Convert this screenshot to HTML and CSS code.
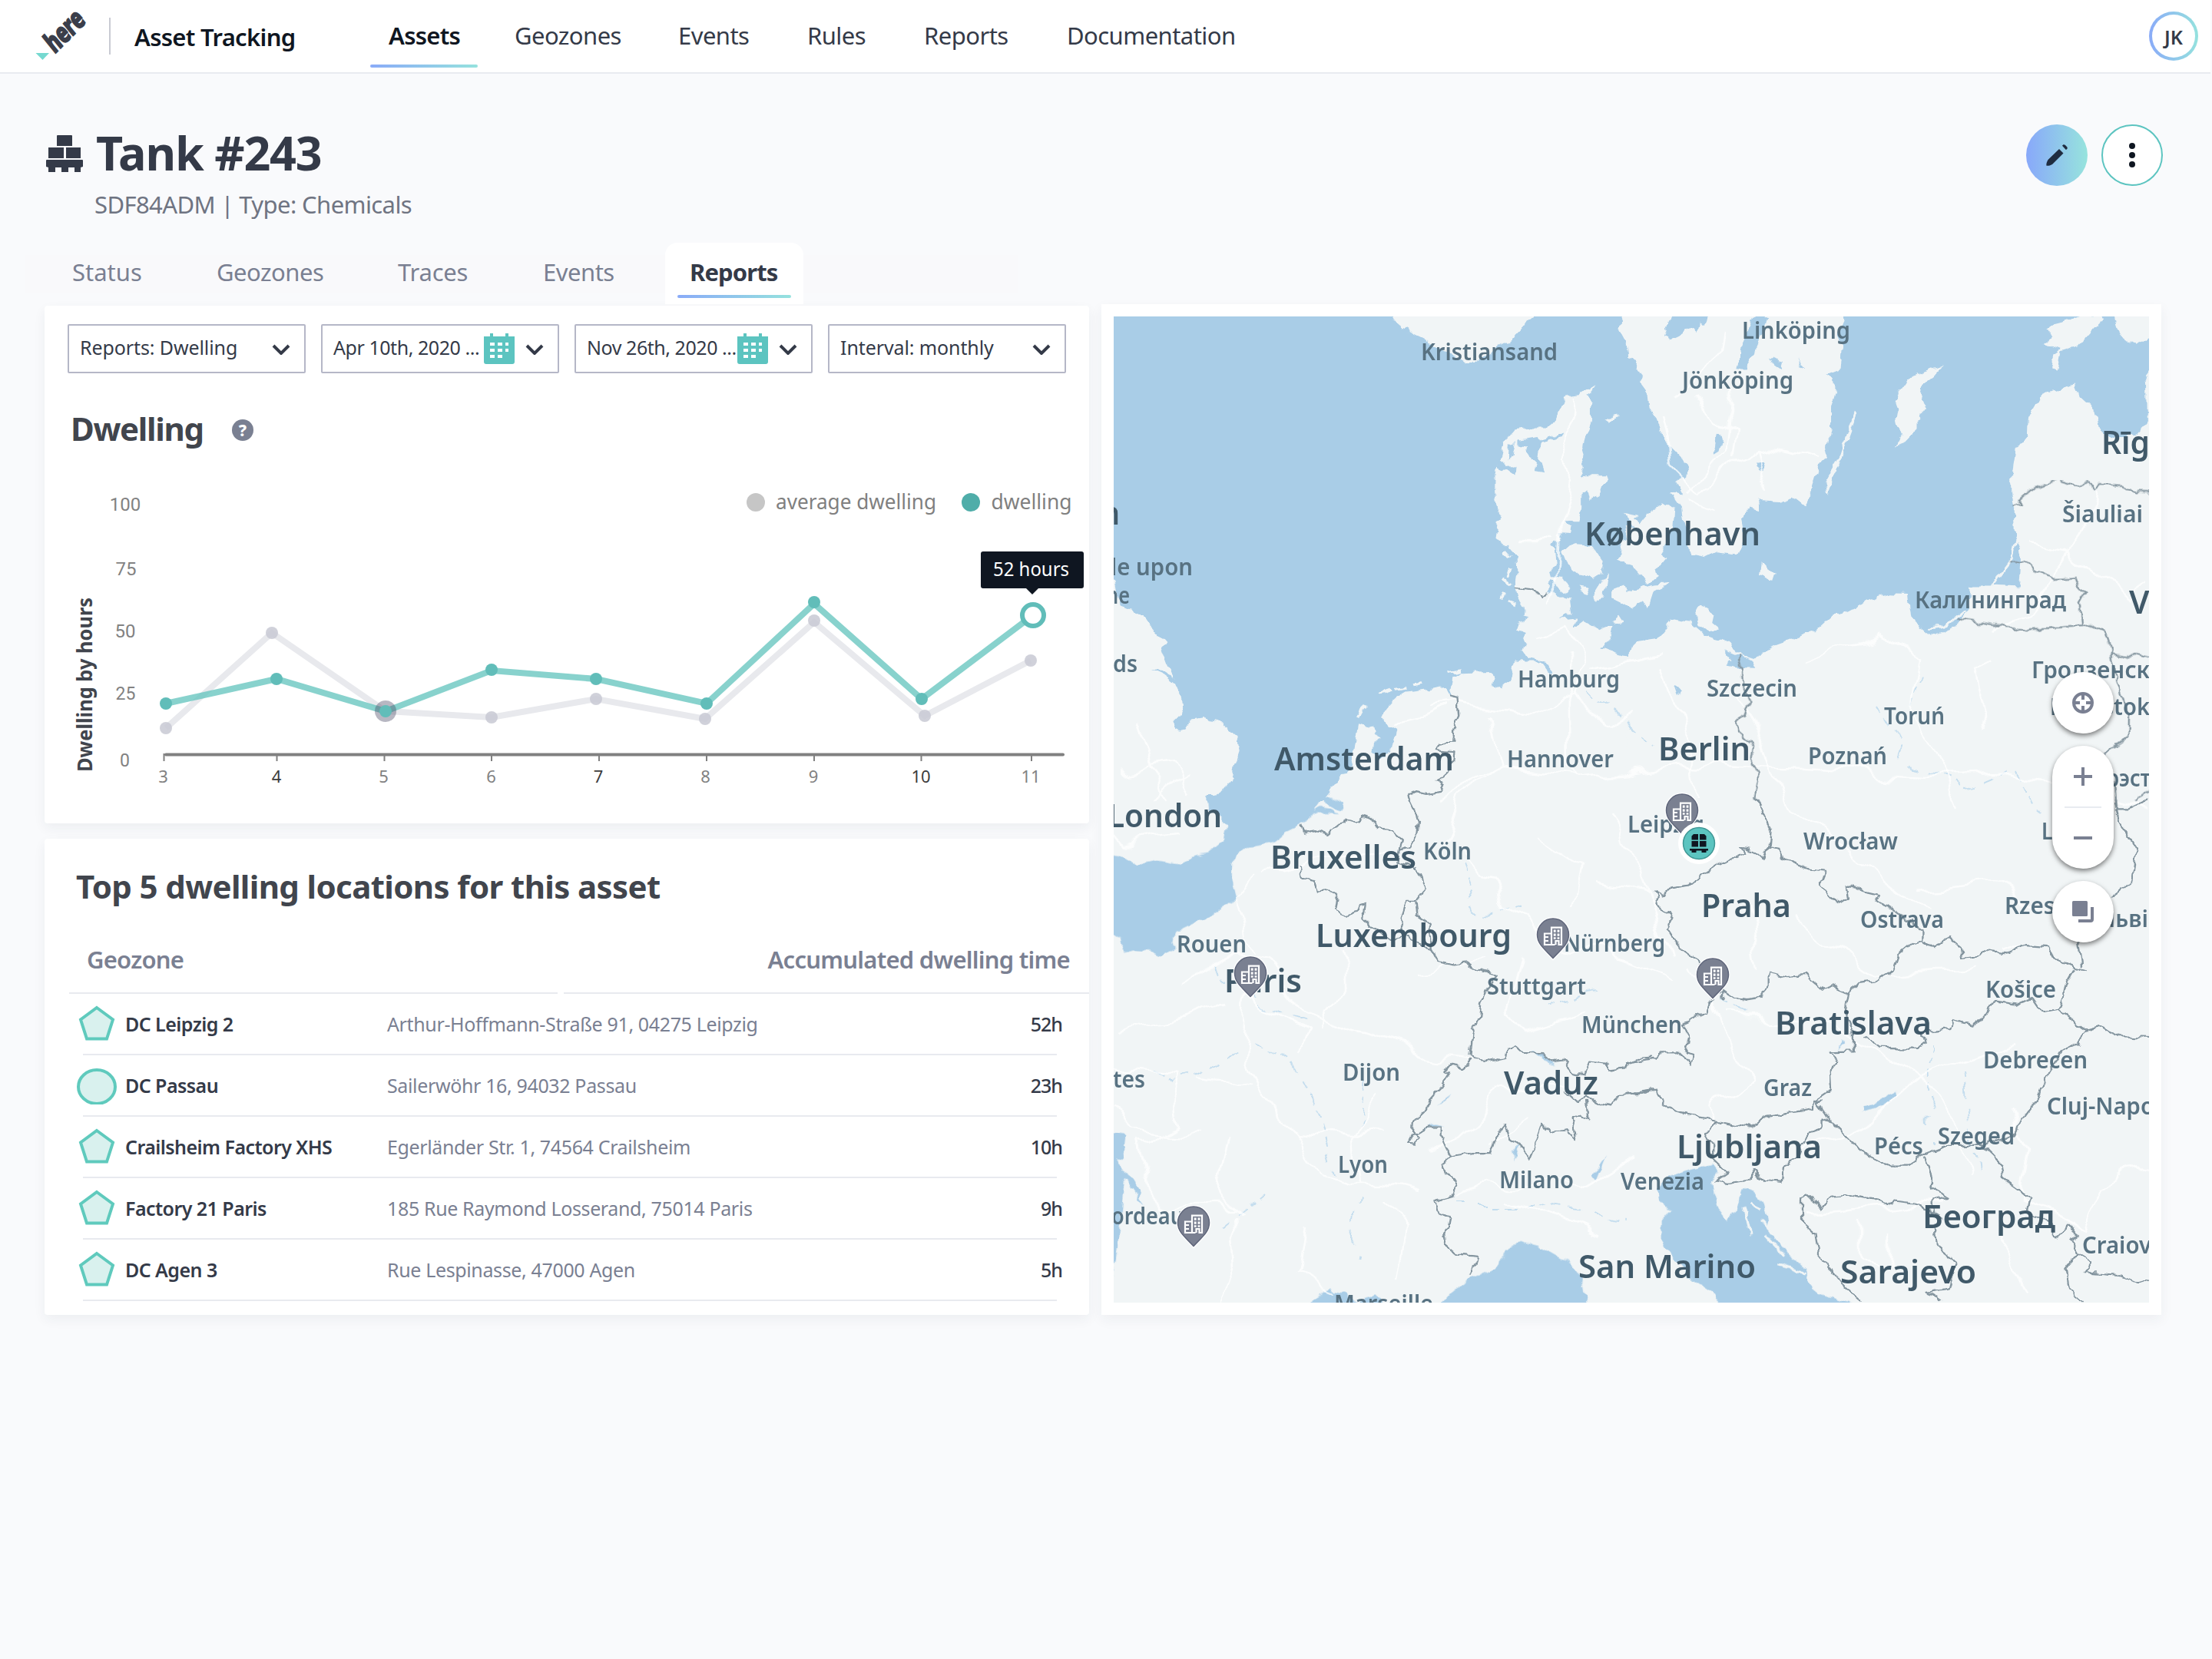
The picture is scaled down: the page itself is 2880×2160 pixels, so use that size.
FILE: index.html
```html
<!DOCTYPE html>
<html lang="en">
<head>
<meta charset="utf-8">
<title>Asset Tracking</title>
<link rel="stylesheet" href="styles.css">
</head>
<body>
<svg class="defs" width="0" height="0" aria-hidden="true">
  <defs>
    <symbol id="chevron" viewBox="0 0 24 14"><path d="M2 2l10 10L22 2" fill="none" stroke="currentColor" stroke-width="4"/></symbol>
    <symbol id="calendar" viewBox="0 0 40 40">
      <path fill="#5cc4c0" d="M0 4h8V0h4v4h16V0h4v4h8v33a3 3 0 0 1-3 3H3a3 3 0 0 1-3-3z"/>
      <path fill="#fff" d="M8 12h6v4H8zM18 12h6v4h-6zM28 12h4v4h-4zM8 20h6v4H8zM18 20h6v4h-6zM28 20h4v4h-4zM8 28h6v4H8zM18 28h6v4h-6z"/>
    </symbol>
    <symbol id="pentagon" viewBox="0 0 52 50"><path d="M26 4l21 15.500-8 25H13l-8-25z" fill="#d9f1ee" stroke="#5fcabd" stroke-width="4"/></symbol>
    <symbol id="circle" viewBox="0 0 52 50"><ellipse cx="26" cy="27" rx="24" ry="22" fill="#d9f1ee" stroke="#5fcabd" stroke-width="4"/></symbol>
    <g id="pin">
      <path d="M-21 22a21 21.500 0 0 1 42 0c0 12-10 19-21 31.500C-11 41-21 34-21 22z" fill="#fff" stroke="#fff" stroke-width="3"/>
      <path d="M-20.500 22a20.500 21 0 0 1 41 0c0 12-9.500 18.500-20.500 30.500C-11 40.500-20.500 34-20.500 22z" fill="#7a8091" stroke="#5f667b" stroke-width="1.500"/>
      <path fill="none" stroke="#fff" stroke-width="2.200" d="M2.500 35h-4.500V12.600H11V35H7.500v-5h-4v5M-3 20.500h-8V35h9M-10 25h4M-10 30h4"/>
      <path fill="#fff" d="M.8 15.500h2.800v3.200H.8zM5.600 15.500h2.800v3.200H5.600zM.8 20.500h2.800v3.200H.8zM5.600 20.500h2.800v3.200H5.600zM.8 25.200h2.800v2.500H.8zM5.600 25.200h2.800v2.500H5.600z"/>
    </g>
  </defs>
</svg>

<header class="topbar">
  <svg class="logo" viewBox="44 8 76 76" width="76" height="76" role="img" aria-label="here">
    <path d="M46.500 68h17.500l-8.500 9z" fill="#76d9d0"/>
    <text class="logo-text" transform="translate(71 69.500) rotate(-45) skewX(-6)" textLength="59" lengthAdjust="spacingAndGlyphs">here</text>
  </svg>
  <span class="topbar-divider"></span>
  <span class="product">Asset Tracking</span>
  <nav class="nav">
    <a class="nav-item nav-active">Assets</a>
    <a class="nav-item nav-geozones">Geozones</a>
    <a class="nav-item nav-events">Events</a>
    <a class="nav-item nav-rules">Rules</a>
    <a class="nav-item nav-reports">Reports</a>
    <a class="nav-item">Documentation</a>
  </nav>
  <span class="avatar"><span class="avatar-inner">JK</span></span>
</header>

<main class="page">
  <section class="asset-head">
    <svg class="pallet" viewBox="0 0 48 48" width="48" height="48"><path fill="#343a48" d="M15 0h18a1 1 0 0 1 1 1v13H14V1a1 1 0 0 1 1-1zM3 16h20v14H3zM26 16h19v14H26zM1 32h46a1 1 0 0 1 1 1v8l-3 1v6h-8v-6h-8v6h-9v-6h-8v6H3v-6l-3-1v-8a1 1 0 0 1 1-1z"/></svg>
    <div class="asset-title">
      <h1>Tank #243</h1>
      <p>SDF84ADM | Type: Chemicals</p>
    </div>
    <button class="round round-edit" aria-label="Edit"><svg viewBox="0 0 28 28" width="28" height="28"><path fill="#1f2c40" d="M17 6l5.500 5.500L8 26c-2.500 1.500-5 2-7.500 1.800C0 25.500.8 23 2.500 20zM21 1.800C22-.2 23.500-.2 25 1l2.200 2.300c1 1.400.6 2.700-1.400 3.700z"/></svg></button>
    <button class="round round-more" aria-label="More"><svg viewBox="0 0 8 32" width="8" height="32"><g fill="#0f1621"><circle cx="4" cy="4" r="4"/><circle cx="4" cy="16" r="4"/><circle cx="4" cy="28" r="4"/></g></svg></button>
  </section>

  <nav class="tabs">
    <a class="tab tab-status">Status</a>
    <a class="tab tab-geozones">Geozones</a>
    <a class="tab tab-traces">Traces</a>
    <a class="tab tab-events">Events</a>
    <a class="tab tab-active">Reports</a>
  </nav>

  <div class="columns">
    <div class="left">
      <section class="card chart-card">
        <div class="filters">
          <div class="select"><span>Reports: Dwelling</span><svg class="chev"><use href="#chevron"/></svg></div>
          <div class="select select-date"><span>Apr 10th, 2020 ...</span><svg class="cal"><use href="#calendar"/></svg><svg class="chev"><use href="#chevron"/></svg></div>
          <div class="select select-date"><span>Nov 26th, 2020 ...</span><svg class="cal"><use href="#calendar"/></svg><svg class="chev"><use href="#chevron"/></svg></div>
          <div class="select"><span>Interval: monthly</span><svg class="chev"><use href="#chevron"/></svg></div>
        </div>
        <div class="chart-title">
          <h2>Dwelling</h2>
          <span class="help">?</span>
        </div>
        <svg class="chart" viewBox="58 600 1360 472" width="1360" height="472">
          <g class="y-labels">
            <text x="163" y="665">100</text>
            <text x="164" y="749">75</text>
            <text x="163" y="830">50</text>
            <text x="163.500" y="911" class="y-narrow">25</text>
            <text x="162.500" y="998" class="y-narrow">0</text>
          </g>
          <text class="axis-title" transform="translate(119.500 1005) rotate(-90)" textLength="227" lengthAdjust="spacingAndGlyphs">Dwelling by hours</text>
          <g class="legend">
            <circle cx="984" cy="654" r="12" fill="#c6c6c6"/>
            <text x="1010" y="663" textLength="209" lengthAdjust="spacingAndGlyphs">average dwelling</text>
            <circle cx="1264" cy="654" r="12" fill="#4fada9"/>
            <text x="1290.500" y="663" textLength="105" lengthAdjust="spacingAndGlyphs">dwelling</text>
          </g>
          <path d="M213.500 981v10M360.500 981v10M500.500 981v10M640 981v10M780 981v10M920 981v10M1060 981v10M1199.500 981v10M1343 981v10" stroke="#808080" stroke-width="2"/>
          <path d="M216 982.500h1168" stroke="#808080" stroke-width="4" stroke-linecap="round"/>
          <g class="x-labels">
            <text x="212.500" y="1019">3</text><text x="360" y="1019" class="strong">4</text><text x="499.500" y="1019">5</text>
            <text x="639.500" y="1019">6</text><text x="779" y="1019" class="strong">7</text><text x="918.500" y="1019">8</text>
            <text x="1059" y="1019">9</text><text x="1199" y="1019" class="strong">10</text><text x="1342" y="1019">11</text>
          </g>
          <path d="M216 948L354 824 502 926 640 934 776 910 918 936 1060 810 1204 932 1342 860" fill="none" stroke="#e8e9ed" stroke-width="8"/>
          <path d="M216 916L360 884 502 926 640 873 776 884 920 916 1060 786 1200 910 1345 801" fill="none" stroke="#66c5bf" stroke-opacity=".78" stroke-width="8"/>
          <g fill="#c8c9d3" fill-opacity=".85"><circle cx="216" cy="948" r="8"/><circle cx="354" cy="824" r="8"/><circle cx="640" cy="934" r="8"/><circle cx="776" cy="910" r="8"/><circle cx="918" cy="936" r="8"/><circle cx="1060" cy="808" r="8"/><circle cx="1204" cy="932" r="8"/><circle cx="1342" cy="860" r="8"/></g>
          <circle cx="502" cy="926" r="14" fill="#4b4a66" fill-opacity=".4"/>
          <g fill="#61bdb9"><circle cx="216" cy="916" r="8"/><circle cx="360" cy="884" r="8"/><circle cx="502" cy="926" r="8"/><circle cx="640" cy="872" r="8"/><circle cx="776" cy="884" r="8"/><circle cx="920" cy="916" r="8"/><circle cx="1060" cy="784" r="8"/><circle cx="1200" cy="910" r="8"/></g>
          <circle cx="1345" cy="801" r="14" fill="#fff" stroke="#61bdb9" stroke-width="6"/>
          <path d="M1280 718h128a3 3 0 0 1 3 3v42a3 3 0 0 1-3 3h-56l-8 8-8-8h-56a3 3 0 0 1-3-3v-42a3 3 0 0 1 3-3z" fill="#0f1621"/>
          <text class="tip" x="1293" y="750" textLength="99" lengthAdjust="spacingAndGlyphs">52 hours</text>
        </svg>
      </section>

      <section class="card table-card">
        <h2>Top 5 dwelling locations for this asset</h2>
        <div class="thead">
          <div class="th">Geozone</div>
          <div class="th th-time">Accumulated dwelling time</div>
        </div>
        <div class="row"><svg class="zone"><use href="#pentagon"/></svg><b>DC Leipzig 2</b><span class="addr">Arthur-Hoffmann-Straße 91, 04275 Leipzig</span><span class="hours">52h</span></div>
        <div class="row"><svg class="zone"><use href="#circle"/></svg><b>DC Passau</b><span class="addr">Sailerwöhr 16, 94032 Passau</span><span class="hours">23h</span></div>
        <div class="row"><svg class="zone"><use href="#pentagon"/></svg><b>Crailsheim Factory XHS</b><span class="addr">Egerländer Str. 1, 74564 Crailsheim</span><span class="hours">10h</span></div>
        <div class="row"><svg class="zone"><use href="#pentagon"/></svg><b>Factory 21 Paris</b><span class="addr">185 Rue Raymond Losserand, 75014 Paris</span><span class="hours">9h</span></div>
        <div class="row"><svg class="zone"><use href="#pentagon"/></svg><b>DC Agen 3</b><span class="addr">Rue Lespinasse, 47000 Agen</span><span class="hours">5h</span></div>
      </section>
    </div>

    <section class="map-card">
      <svg class="map" viewBox="1450 412 1348 1284" width="1348" height="1284">
        <defs>
          <filter id="rough" x="0" y="0" width="100%" height="100%"><feTurbulence type="fractalNoise" baseFrequency=".07" numOctaves="2" seed="4"/><feDisplacementMap in="SourceGraphic" scale="11" xChannelSelector="R" yChannelSelector="G"/></filter>
          <filter id="bend" x="0" y="0" width="100%" height="100%"><feTurbulence type="fractalNoise" baseFrequency=".018" numOctaves="2" seed="9"/><feDisplacementMap in="SourceGraphic" scale="44" xChannelSelector="R" yChannelSelector="G"/></filter>
        </defs>
        <rect x="1450" y="412" width="1348" height="1284" fill="#f1f5f6"/>
        <g filter="url(#rough)">
          <rect x="1440" y="400" width="1370" height="645" fill="#a9cde7"/>
          <!-- land, north-west -->
          <g transform="translate(1430 390) scale(.4592 .4209)" fill="#f1f5f6">
            <path d="M833 20V52C850 85 890 105 940 130L1000 170 1040 195 1070 195 1110 165 1150 140 1175 120 1200 90 1215 65 1235 52V20Z"/>
            <path d="M20 860L44 870 52 920 70 955 130 980 150 1015 188 1062 178 1080 195 1130 217 1175 180 1150 150 1145 180 1160 215 1190 238 1245 240 1272 212 1305 222 1325 242 1335 262 1300 300 1295 350 1308 395 1355 400 1400 388 1440 380 1485 345 1530 308 1545 308 1590 20 1590Z"/>
            <path d="M630 1590L640 1540 670 1500 700 1465 720 1440 728 1380 738 1312 760 1318 778 1325 782 1345 805 1358 782 1375 778 1400 800 1420 825 1395 838 1370 848 1335 820 1320 808 1290 815 1265 840 1235 870 1215 920 1210 985 1200 995 1225 1005 1170 1030 1153 1110 1150 1125 1175 1120 1195 1140 1205 1165 1180 1172 1130 1185 1115 1215 1120 1255 1120 1275 1150 1288 1152 1265 1118 1220 1108 1205 1085 1212 1060 1205 1035 1180 1025 1190 1005 1225 985 1208 980 1210 955 1190 920 1182 890 1188 850 1186 800 1165 770 1140 758 1122 745 1130 690 1148 680 1130 640 1124 600 1125 540 1130 510 1142 480 1150 440 1178 405 1225 398 1270 398 1290 380 1330 297 1365 292 1410 262 1388 300 1398 325 1398 380 1380 430 1370 470 1378 515 1365 550 1380 540 1440 540 1445 560 1420 600 1395 625 1388 590 1368 610 1368 650 1362 685 1325 685 1340 700 1338 722 1300 720 1310 745 1285 755 1295 775 1300 820 1285 840 1290 860 1275 880 1272 905 1335 930 1340 970 1310 990 1355 985 1350 1015 1375 995 1415 1020 1440 1010 1460 1010 1452 1050 1425 1080 1470 1095 1500 1105 1515 1070 1540 1055 1575 1050V1590Z"/>
            <path d="M1315 780L1340 755 1400 760 1430 810 1425 850 1405 865 1360 850 1330 820ZM1455 900L1490 885 1500 910 1535 900 1560 920 1540 940 1510 955 1455 925ZM1442 845L1436 890 1415 935 1408 905ZM1280 855L1320 860 1340 895 1325 910 1300 890ZM1360 885L1385 890 1392 910 1375 905ZM1455 990L1470 975 1485 1000 1465 1005ZM1435 370L1475 358 1450 382ZM1490 660L1530 670 1510 685Z"/>
            <path d="M735 1295L758 1250M795 1219L830 1206M842 1204L876 1199M895 1196L915 1190M990 1155L1030 1148M1150 780L1165 798M1170 830L1162 860M1148 865L1170 880M1150 905L1142 930M1160 935L1185 945" fill="none" stroke="#f1f5f6" stroke-width="9"/>
            <g fill="#a9cde7"><path d="M1190 435L1245 425 1250 436 1320 412 1315 425 1256 442 1248 490 1262 535 1235 530 1240 500 1215 480 1210 455 1190 450ZM1130 490L1165 520 1190 510 1188 545 1160 535 1128 520ZM1165 445L1182 440 1175 490 1162 500Z"/></g>
          </g>
          <!-- land, north-east -->
          <g transform="translate(2120 390) scale(.4592 .4209)" fill="#f1f5f6">
            <path d="M-20 20V52L-25 90 -5 130 -2 180 25 190 20 215 45 235 35 260 55 290 60 340 80 370 100 430 145 480 168 530 165 560 135 560 155 600 120 595 150 640 155 680 165 740 175 790 215 798 250 780 310 788 330 740 320 680 345 640 370 650 365 620 430 625 470 610 500 635 520 590 540 520 560 480 575 400 575 330 590 270 565 230 600 215 605 150 590 110 610 60 608 20Z"/>
            <path d="M-30 805L-20 780 -25 745 0 740 -5 700 20 710 0 665 35 690 60 655 95 628 130 645 125 700 115 740 90 790 110 800 95 820 75 830 80 860 55 880 35 850 10 820ZM75 880L122 876 72 902 55 960 42 930 0 930 10 900ZM190 975L205 945 245 975 240 1000 262 1020 230 1032 195 1010ZM372 815L420 845 412 872 368 850ZM640 348L648 358 600 500 565 605 558 560 600 480ZM755 310L800 240 890 205 860 240 835 260 830 310 845 335 820 370 820 400 785 440 760 450 775 420 758 370 765 340ZM1185 85L1240 70 1300 40 1350 60 1320 90 1280 140 1225 160 1215 215 1198 210 1205 170 1225 155 1180 135 1205 115ZM1375 30L1390 110 1440 145 1500 95V30Z"/>
            <path d="M1500 180L1465 235 1470 260 1472 380 1440 420 1370 425 1338 405 1325 345 1280 300 1265 260 1165 300 1132 370 1130 415 1095 465 1085 530 1085 600 1095 660 1098 740 1110 770 1115 800 1108 890 1030 885 965 885 968 950 950 975 935 1000 900 1028 860 1040 820 1005 800 980 790 910 740 908 680 930 620 965 580 975 530 1025 470 1050 380 1085 360 1110 320 1100 270 1055 215 1040 175 1000 120 990 85 1045 20 1055 0 1100 -10 1590H1500Z"/>
            <path d="M1100 740L1088 800 1030 885M955 960L900 1010 850 1018" fill="none" stroke="#f1f5f6" stroke-width="7"/>
            <path fill="#a9cde7" d="M318 150L355 60 370 30 395 60 385 90 355 170 330 215 308 215ZM100 110L130 30H235L215 80 200 70 195 100 180 85 140 110 120 120ZM270 1080L300 1095 350 1115 362 1140 320 1138 275 1130 295 1115ZM400 180L440 195 435 215 415 200ZM480 180L505 215 490 205ZM250 420L268 425 258 465 243 475ZM360 505L385 505 380 535 362 520ZM130 1190L148 1210 140 1222Z"/>
          </g>
          <!-- seas and lakes, south-west -->
          <g transform="translate(1430 1040) scale(.4592 .4464)" fill="#a9cde7">
            <path d="M308 -10L312 30 350 50 362 80 355 122 312 158 275 165 230 190 175 178 110 188 70 170 20 160V375L60 405 68 445 100 438 150 445 180 460 215 435 210 415 225 385 300 348 345 325 392 290 380 240 382 190 390 160 430 140 490 130 530 100 580 75 600 50 620 20 640 -10Z"/>
            <path d="M950 1500L1000 1440 1050 1400 1125 1370 1160 1315 1200 1292 1250 1305 1310 1340 1340 1350 1365 1390 1375 1430 1395 1500ZM590 1500L610 1460 655 1435 700 1445 735 1465 790 1450 830 1500ZM20 975L75 980 72 1010 78 1050 55 1050 60 1080 100 1110 130 1190 105 1150 75 1105 65 1200 55 1300 44 1400H20Z"/>
            <path d="M915 968Q945 940 985 958 945 955 915 968ZM960 892L1003 860 985 880ZM1228 735Q1270 745 1295 778 1270 770 1228 735ZM1440 1038L1410 1115 1400 1100ZM1190 1005L1180 1060 1175 1030ZM600 40L680 45 660 30 630 25ZM620 0L690 40 700 15 660 -5Z"/>
          </g>
          <!-- seas and lakes, south-east -->
          <g transform="translate(2120 1040) scale(.4592 .4464)">
            <path fill="#a9cde7" d="M85 1140L115 1100 170 1085 240 1065 260 1090 235 1110 240 1150 255 1200 280 1230 310 1200 325 1140 355 1150 385 1180 395 1220 400 1260 430 1300 500 1370 515 1420 545 1445 625 1470 660 1500H270L240 1440 180 1400 130 1340 95 1290 95 1230 120 1200 90 1175ZM665 895Q720 885 752 848L762 862Q720 903 668 910Z"/>
            <path fill="#a9cde7" d="M597 735L610 698 612 715Z"/>
            <path d="M330 1190L345 1270M345 1175L370 1200M380 1230L430 1290 465 1330M385 1270L440 1330M430 1360L500 1385" fill="none" stroke="#f1f5f6" stroke-width="9"/>
          </g>
        </g>
        <!-- rivers -->
        <g fill="none" stroke="#b9d7ec" stroke-opacity=".8" stroke-width="1.800" stroke-dasharray="12 9" filter="url(#bend)">
          <path d="M1585 1250L1600 1270 1650 1310 1700 1330M1630 1352L1680 1385 1715 1450 1735 1530M1500 1395L1525 1410 1610 1375M1780 1400L1770 1470M1775 1560L1765 1640M1900 1115L1925 1180 1990 1185M2010 1310L2080 1290M2070 900L2100 930 2150 970M2450 920L2490 1000 2560 1025 2620 1000M2630 1000L2660 1060M2510 1350L2512 1480M2560 1400L2575 1540M2225 1300L2280 1330M1585 1590L1640 1545M2490 930L2505 870M1900 1570L2000 1570 2110 1590"/>
        </g>
        <!-- roads -->
        <g fill="none" stroke="#fff" stroke-opacity=".75" stroke-width="2.600" stroke-linejoin="round" filter="url(#bend)">
          <path d="M2045 530L2040 560 2030 590 2050 630 2040 670 2022 710 2015 780M2040 850L2042 1000 2055 1010M1975 712H2015M2000 830L2045 818 2065 860 2045 900 1995 930 1900 915 1860 920M2045 900L2095 950 2120 935M2075 865L2120 855 2160 845M1940 930L1960 1000 1900 1040 1880 1100M1820 940L1890 920M1880 1040L1960 1000 2055 1010 2200 995 2350 1000 2500 1010 2620 1005 2790 1050"/>
          <path d="M2165 530L2175 600 2215 640 2275 590 2290 580 2360 600M2255 510L2245 590 2200 640M2290 580L2305 640M2240 432L2235 470 2185 510M2215 510L2235 550 2260 560 2255 600M2200 650L2230 665"/>
          <path d="M2160 865L2170 900 2200 960 2210 1040M2250 890L2300 970 2330 1060 2400 1100 2500 1180M2340 860L2450 830 2500 850 2490 930 2530 1010 2545 1050M2590 850L2570 870 2590 950M2640 710L2700 720 2770 780 2798 760M2700 720L2740 630M2700 720L2640 800 2600 820M2500 1160L2600 1150 2650 1180"/>
          <path d="M1530 1280L1600 1240 1650 1250 1700 1320 1790 1350 1850 1370 1920 1380M1600 1310L1450 1350M1625 1300L1620 1380 1650 1430 1680 1470 1800 1480M1630 1300L1700 1340 1690 1370M1745 1230L1745 1290 1720 1340M1850 1260L1930 1250M1450 1390L1530 1400 1540 1460 1490 1490 1500 1540 1500 1570 1600 1570M1560 1400L1630 1410M1600 1480L1590 1540 1605 1580M1680 1470L1720 1530 1750 1540 1800 1540 1850 1550M1770 1540L1765 1480 1800 1420M1600 1580L1605 1650 1590 1696M1700 1600L1690 1660 1740 1680M1800 1560L1830 1600 1820 1660M1450 1440L1480 1470 1560 1475M1640 1140L1610 1170 1630 1240M1650 1140L1700 1120 1800 1110M1530 1090L1470 1100 1450 1090M1460 1000L1530 990 1550 1040M1500 1040L1550 1010M1480 940L1500 1000 1520 1040"/>
          <path d="M1900 1100L1960 1180 2000 1200 2010 1230 2100 1240 2180 1270M1980 1250L1960 1310 1990 1340 2060 1320M2000 1090L2060 1130 2050 1180M2100 1060L2150 1180 2170 1240M2080 1150L2140 1160M2200 1250L2260 1370 2280 1400 2230 1440 2230 1480M2250 1330L2380 1330 2500 1400 2620 1360M2500 1400L2430 1460 2350 1500M2500 1400L2550 1470 2560 1540M2340 1200L2440 1270 2560 1260M2280 1180L2290 1260M2600 1240L2640 1230M2620 1450L2640 1500 2630 1560 2720 1600 2740 1540 2798 1520M2130 1500L2060 1540 1940 1540 1900 1560M1960 1560L2080 1610M1870 1500L1960 1420 2040 1420M2420 1590L2420 1640 2460 1640 2460 1600M2350 1580L2450 1570 2530 1560M2600 1600L2640 1670M1930 1490L1990 1450"/>
        </g>
        <!-- country borders -->
        <g class="borders" filter="url(#rough)">
          <path d="M1182 893L1225 898 1245 905 1258 917 1272 908M992 1222L1018 1228 1022 1290 1005 1330 1002 1368 965 1370 962 1395 1005 1400 1000 1450 962 1488 978 1505 970 1522 930 1530 895 1522 878 1530 882 1545" transform="translate(1430 390) scale(.4592 .4209)"/>
          <path d="M1090 640L1110 635 1110 620 1150 580 1215 560 1270 578 1305 565 1320 585 1340 570 1400 575 1440 595 1490 597M1080 812L1115 818 1130 812 1150 835 1210 865 1268 860 1275 880 1297 905 1280 940 1285 1008M930 990L1020 1005 1130 1020 1285 1010 1310 1005 1360 1045 1370 1100 1380 1160 1420 1290 1418 1355 1365 1395 1350 1410M1370 1100L1410 1110 1440 1095 1490 1105M312 1100L322 1140 325 1200 345 1240 330 1285 305 1310 310 1335 355 1380 350 1420 372 1480 360 1540 375 1568M1490 1515L1440 1545M1378 1490L1385 1568" transform="translate(2120 390) scale(.4592 .4209)"/>
          <path d="M580 80L585 100 610 92 650 105 685 75 700 72 705 58 740 68 750 50 775 58 790 85 830 90 862 115 855 150 850 185 900 205M880 0L908 60 905 100 880 140 855 150M900 200L915 235 928 265 900 300 875 300 858 350 865 400M900 300L905 340 940 365 945 440M570 200L575 232 612 240 620 270 660 265 680 285 672 325 710 340 735 330 740 305 757 300 752 350 780 378 830 415 870 400 915 425 945 435 965 475 1005 485 1045 480 1075 497 1135 515 1100 560 1085 600 1080 640 1062 680 1055 745 1070 760 1110 765 1155 755 1160 730 1180 720 1205 742 1250 742 1290 768 1320 765 1350 800 1375 805 1390 765 1440 770 1450 790 1490 785 1530 755 1568 752M1060 760L1040 782 1000 775 985 795 995 800 970 840 935 880 930 905 895 940 893 970 910 990 895 1005 878 1003 890 980 930 960 975 960 975 990 1000 1045 1060 1035 1110 1035 1125 990 1155 950 1170 995 1205 1020 1220 1055 1235 1020 1260 945 1280 975 1330 965 1355 990 1345 930 1365 920 1390 935 1385 880M1320 850L1355 885 1385 870 1425 890 1455 897 1475 862 1540 860 1568 850M1000 1045L975 1065 985 1085 1000 1110 1015 1130 1005 1160 955 1175 965 1205 1000 1220 995 1250 980 1265 985 1300 1020 1330 1075 1335 1055 1390" transform="translate(1430 1040) scale(.4592 .4464)"/>
          <path d="M360 0L380 45 405 85 400 140 380 175 355 150 320 140 330 160 265 185 205 225 175 250 120 258 95 290 78 270 85 310 125 345 110 375 150 440 190 470 240 530 270 560 300 580 340 585 370 580 400 545 400 508 450 520 505 515 550 555 580 545 625 565 650 535 700 530 750 500 765 455 805 420 835 415 870 435 910 405 945 435 950 470 985 465 1005 440 1080 450 1120 430 1190 435 1205 465 1265 490 1300 500M385 160L405 145 430 150 445 180 510 205 560 210 545 250 590 305 625 290 620 250 670 270 712 280 700 300 760 330 835 385 835 415M1265 495L1240 540 1235 570 1220 615 1265 650 1300 675 1335 665 1390 690 1490 695M670 690L710 725 820 728 840 715 830 680 910 670 920 645 970 660 1010 635 1035 590 1100 600 1145 580 1175 625 1220 615M625 565L615 620 640 690 640 738 570 740 595 765 570 795 573 850 530 880 575 940M1300 675L1275 715 1230 735 1190 795 1165 870 1115 940 1095 980 1000 1010M1380 0L1390 60 1440 150 1430 240 1370 285M1275 400L1285 490M1380 30L1420 30 1470 5M228 590L220 625 155 655 175 700 165 740 185 745 180 775 140 740 90 740 80 755 0 770M0 860L80 848 90 880 130 915 250 938 350 960 390 925 480 912 525 905 525 880 550 885M265 590L270 560 228 590M250 938L220 975 240 1010 240 1050 280 1090 245 1115 285 1120 340 1110 355 1085 385 1115 435 1120 440 1070 480 1050 510 975 550 960 550 935 580 945 630 995 680 1040 740 1070 795 1070 840 1035 905 1010 1000 1010M840 1045L860 1100 860 1135 905 1160 865 1170 870 1215M660 1465L600 1410 540 1330 530 1270 490 1235 490 1165 510 1155 550 1195 575 1160 620 1155 700 1170 735 1185 760 1175 830 1185 890 1225M870 1240L875 1305 930 1350 910 1430 850 1440 890 1468M1000 1010L1060 1070 1065 1110 1140 1165 1130 1200 1200 1240 1215 1280 1250 1245 1280 1270 1255 1290 1275 1325 1315 1350 1295 1380 1400 1390 1445 1410 1490 1400M1275 1325L1240 1370 1250 1430 1290 1468" transform="translate(2120 1040) scale(.4592 .4464)"/>
        </g>
        <g class="city">
          <text x="1850" y="469" textLength="178" lengthAdjust="spacingAndGlyphs">Kristiansand</text><text x="2268" y="441" textLength="141" lengthAdjust="spacingAndGlyphs">Linköping</text><text x="2190" y="506" textLength="145" lengthAdjust="spacingAndGlyphs">Jönköping</text>
          <text x="2685" y="680" textLength="105" lengthAdjust="spacingAndGlyphs">Šiauliai</text><text x="2493" y="792" textLength="197" lengthAdjust="spacingAndGlyphs">Калининград</text><text x="2645" y="883" textLength="154" lengthAdjust="spacingAndGlyphs">Гродзенск</text>
          <text x="2669" y="931" textLength="130" lengthAdjust="spacingAndGlyphs">Białystok</text><text x="2725" y="1024" textLength="75" lengthAdjust="spacingAndGlyphs">Брэст</text><text x="2658" y="1093" textLength="80" lengthAdjust="spacingAndGlyphs">Lublin</text>
          <text x="2610" y="1190" textLength="122" lengthAdjust="spacingAndGlyphs">Rzeszów</text><text x="2733" y="1207" textLength="64" lengthAdjust="spacingAndGlyphs">Льві</text>
          <text x="1446" y="749" textLength="107" lengthAdjust="spacingAndGlyphs">le upon</text><text x="1440" y="786" textLength="31" lengthAdjust="spacingAndGlyphs">ne</text><text x="1449" y="875" textLength="32" lengthAdjust="spacingAndGlyphs">ds</text>
          <text x="1976" y="895" textLength="133" lengthAdjust="spacingAndGlyphs">Hamburg</text><text x="2222" y="907" textLength="118" lengthAdjust="spacingAndGlyphs">Szczecin</text><text x="2453" y="943" textLength="79" lengthAdjust="spacingAndGlyphs">Toruń</text>
          <text x="1962" y="999" textLength="139" lengthAdjust="spacingAndGlyphs">Hannover</text><text x="2354" y="995" textLength="103" lengthAdjust="spacingAndGlyphs">Poznań</text><text x="1853" y="1119" textLength="63" lengthAdjust="spacingAndGlyphs">Köln</text>
          <text x="2119" y="1084" textLength="100" lengthAdjust="spacingAndGlyphs">Leipzig</text><text x="2348" y="1106" textLength="123" lengthAdjust="spacingAndGlyphs">Wrocław</text><text x="2422" y="1208" textLength="109" lengthAdjust="spacingAndGlyphs">Ostrava</text>
          <text x="2036" y="1239" textLength="132" lengthAdjust="spacingAndGlyphs">Nürnberg</text><text x="1532" y="1240" textLength="91" lengthAdjust="spacingAndGlyphs">Rouen</text><text x="1936" y="1295" textLength="129" lengthAdjust="spacingAndGlyphs">Stuttgart</text>
          <text x="2059" y="1345" textLength="131" lengthAdjust="spacingAndGlyphs">München</text><text x="2585" y="1299" textLength="92" lengthAdjust="spacingAndGlyphs">Košice</text><text x="2582" y="1391" textLength="136" lengthAdjust="spacingAndGlyphs">Debrecen</text>
          <text x="2665" y="1451" textLength="140" lengthAdjust="spacingAndGlyphs">Cluj-Napo</text><text x="1748" y="1407" textLength="75" lengthAdjust="spacingAndGlyphs">Dijon</text><text x="1449" y="1416" textLength="42" lengthAdjust="spacingAndGlyphs">tes</text>
          <text x="2296" y="1427" textLength="63" lengthAdjust="spacingAndGlyphs">Graz</text><text x="2440" y="1503" textLength="64" lengthAdjust="spacingAndGlyphs">Pécs</text><text x="2523" y="1490" textLength="100" lengthAdjust="spacingAndGlyphs">Szeged</text>
          <text x="1742" y="1527" textLength="65" lengthAdjust="spacingAndGlyphs">Lyon</text><text x="1952" y="1547" textLength="97" lengthAdjust="spacingAndGlyphs">Milano</text><text x="2110" y="1549" textLength="109" lengthAdjust="spacingAndGlyphs">Venezia</text>
          <text x="1447" y="1594" textLength="94" lengthAdjust="spacingAndGlyphs">ordeau</text><text x="2711" y="1632" textLength="90" lengthAdjust="spacingAndGlyphs">Craiov</text><text x="1737" y="1708" textLength="129" lengthAdjust="spacingAndGlyphs">Marseille</text>
        </g>
        <g class="capital">
          <text x="1434" y="683" textLength="24" lengthAdjust="spacingAndGlyphs">n</text><text x="2063" y="710" textLength="229" lengthAdjust="spacingAndGlyphs">København</text><text x="2736" y="591" textLength="63" lengthAdjust="spacingAndGlyphs">Rīg</text><text x="2772" y="799">V</text>
          <text x="1659" y="1003" textLength="234" lengthAdjust="spacingAndGlyphs">Amsterdam</text><text x="2159" y="990" textLength="120" lengthAdjust="spacingAndGlyphs">Berlin</text><text x="1442" y="1077" textLength="149" lengthAdjust="spacingAndGlyphs">London</text>
          <text x="1654" y="1131" textLength="190" lengthAdjust="spacingAndGlyphs">Bruxelles</text><text x="2215" y="1194" textLength="117" lengthAdjust="spacingAndGlyphs">Praha</text><text x="1713" y="1233" textLength="255" lengthAdjust="spacingAndGlyphs">Luxembourg</text>
          <text x="1594" y="1292" textLength="101" lengthAdjust="spacingAndGlyphs">Paris</text><text x="2311" y="1347" textLength="204" lengthAdjust="spacingAndGlyphs">Bratislava</text><text x="1958" y="1425" textLength="123" lengthAdjust="spacingAndGlyphs">Vaduz</text>
          <text x="2183" y="1508" textLength="189" lengthAdjust="spacingAndGlyphs">Ljubljana</text><text x="2503" y="1599" textLength="173" lengthAdjust="spacingAndGlyphs">Београд</text><text x="2055" y="1664" textLength="231" lengthAdjust="spacingAndGlyphs">San Marino</text><text x="2396" y="1671" textLength="177" lengthAdjust="spacingAndGlyphs">Sarajevo</text>
        </g>
        <use href="#pin" x="1628" y="1245"/><use href="#pin" x="2022" y="1195"/><use href="#pin" x="1554" y="1570"/><use href="#pin" x="2230" y="1247"/><use href="#pin" x="2190" y="1033"/>
        <g transform="translate(2212 1098)">
          <circle r="27" fill="#fff"/><circle r="20.500" fill="#5cc4c0" stroke="#3f9694" stroke-width="1.500"/>
          <path fill="#0f1621" d="M-7-12h6v7.500h-8.500V-9.500zM1-12h6l2.500 2.500v5H1zM-9.500-3h8.500v7.500h-8.500zM1-3h8.500v7.500H1zM-12 7h24v2.500H9.500V12h-6V9.500h-7V12h-6V9.500H-12z"/>
        </g>
      </svg>
      <div class="map-controls">
        <button class="ctl" aria-label="Locate"><svg viewBox="0 0 28 28" width="28" height="28" fill="none" stroke="#7a8092" stroke-width="4"><circle cx="14" cy="14" r="12"/><path d="M14 2v8M14 18v8M2 14h8M18 14h8"/></svg></button>
        <div class="zoom-ctl">
          <button class="zoom-btn" aria-label="Zoom in"><svg viewBox="0 0 24 24" width="24" height="24" stroke="#7a8092" stroke-width="4"><path d="M12 0v24M0 12h24"/></svg></button>
          <span class="zoom-line"></span>
          <button class="zoom-btn zoom-out" aria-label="Zoom out"><svg viewBox="0 0 24 24" width="24" height="24" stroke="#7a8092" stroke-width="4"><path d="M0 12h24"/></svg></button>
        </div>
        <button class="ctl" aria-label="Layers"><svg viewBox="0 0 28 28" width="28" height="28"><rect width="20" height="20" rx="1.500" fill="#7a8092"/><path d="M26 8v16a2 2 0 0 1-2 2H8" fill="none" stroke="#7a8092" stroke-width="4"/></svg></button>
      </div>
    </section>
  </div>
</main>
</body>
</html>
```
FILE: styles.css
```css
* { box-sizing: border-box; }

body {
  margin: 0;
  width: 2880px;
  height: 2160px;
  overflow: hidden;
  background: #f9fafc;
  color: #343a48;
  font-family: "Noto Sans", "Open Sans", sans-serif;
}

.defs { display: block; position: absolute; }
button { padding: 0; border: 0; background: #fff; }
h1, h2, p { margin: 0; }

/* Top bar */
.topbar {
  display: flex;
  align-items: center;
  height: 96px;
  width: 2878px;
  padding: 0 16px 0 44px;
  background: #fff;
  border-bottom: 2px solid #e8ebf0;
}
.logo { display: block; overflow: visible; }
.logo-text { font-size: 36px; font-weight: 800; fill: #3b3e4a; stroke: #3b3e4a; stroke-width: 2; }
.topbar-divider { width: 2px; height: 48px; margin: 0 31px 0 22px; background: #c9cbd3; }
.product { width: 307px; font-size: 31px; font-weight: 600; letter-spacing: -.68px; line-height: 94px; padding-top: 2px; color: #0f1621; white-space: nowrap; }
.nav { display: flex; flex: 1; height: 94px; }
.nav-item {
  position: relative;
  height: 94px;
  font-size: 31px;
  letter-spacing: -.55px;
  line-height: 92px;
  white-space: nowrap;
}
.nav-active { width: 140px; margin-right: 48px; padding-left: 24px; font-weight: 600; letter-spacing: -.7px; color: #0f1621; }
.nav-active::after {
  content: "";
  position: absolute;
  left: 0;
  bottom: 6px;
  width: 140px;
  height: 4px;
  border-radius: 2px;
  background: linear-gradient(90deg, #8aabf8, #95e2de);
}
.nav-geozones { width: 213px; }
.nav-events { width: 168px; }
.nav-rules { width: 152px; }
.nav-reports { width: 186px; }
.avatar {
  width: 64px;
  height: 64px;
  padding: 4px;
  border-radius: 50%;
  background: linear-gradient(90deg, #8aabf8, #95e2de);
}
.avatar-inner {
  display: block;
  height: 56px;
  border-radius: 50%;
  background: #fff;
  font-size: 25px;
  font-weight: 600;
  line-height: 58px;
  text-align: center;
}

/* Asset heading */
.asset-head { display: flex; height: 220px; padding: 66px 64px 0 60px; }
.pallet { margin-top: 14px; }
.asset-title { flex: 1; padding-left: 15px; }
h1 { padding: 1px 0 0 2px; font-size: 61px; font-weight: 700; letter-spacing: -1.2px; line-height: 72px; white-space: nowrap; }
.asset-title p { font-size: 31px; letter-spacing: -.6px; line-height: 62px; color: #6f7482; white-space: nowrap; }
.round {
  display: flex;
  align-items: center;
  justify-content: center;
  width: 80px;
  height: 80px;
  border-radius: 50%;
}
.round-edit { margin-right: 18px; background: linear-gradient(90deg, #88a8fa, #97e4dd); }
.round-more { border: 2px solid #5cc4c0; }

/* Tabs */
.tabs {
  display: flex;
  align-items: flex-end;
  width: 1292px;
  height: 80px;
  margin-left: 33px;
  padding-left: 61px;
  background: linear-gradient(#f9f9fb, #f9f9fb) 0 16px / 100% 49px no-repeat;
}
.tab { height: 80px; font-size: 31px; letter-spacing: -.5px; line-height: 76px; color: #7a8092; white-space: nowrap; }
.tab-status { width: 188px; letter-spacing: 0; }
.tab-geozones { width: 236px; }
.tab-traces { width: 189px; letter-spacing: -.2px; }
.tab-events { width: 159px; }
.tab-active {
  position: relative;
  width: 180px;
  padding-left: 32px;
  border-radius: 16px 16px 0 0;
  background: #fff;
  color: #343a48;
  font-weight: 700;
  letter-spacing: -.9px;
}
.tab-active::after {
  content: "";
  position: absolute;
  left: 16px;
  bottom: 8px;
  width: 148px;
  height: 4px;
  border-radius: 2px;
  background: linear-gradient(90deg, #8aabf8, #95e2de);
}

/* Columns */
.columns { display: flex; gap: 16px; padding-left: 58px; }
.left { display: flex; flex-direction: column; gap: 20px; width: 1360px; padding-top: 2px; }
.card { border-radius: 4px; background: #fff; box-shadow: 0 6px 16px rgba(40, 50, 70, .06); }

/* Chart card */
.chart-card { height: 674px; padding-top: 24px; }
.filters { display: flex; gap: 20px; padding: 0 30px; }
.select {
  display: flex;
  align-items: center;
  width: 310px;
  height: 64px;
  padding: 0 18px 0 14px;
  border: 2px solid #b5b7c7;
  border-radius: 2px;
  font-size: 25px;
  letter-spacing: -.1px;
  line-height: 36px;
  white-space: nowrap;
}
.select-date { letter-spacing: -.45px; }
.select > span { flex: 1; width: 0; padding-bottom: 4px; }
.cal { width: 40px; height: 40px; margin-right: 14px; }
.chev { width: 24px; height: 14px; margin-top: 2px; }
.chart-title { display: flex; align-items: center; height: 114px; padding: 30px 0 0 34px; }
h2 { font-size: 42px; font-weight: 700; letter-spacing: -.62px; line-height: 60px; color: #41454d; white-space: nowrap; }
.chart-title h2 { width: 210px; letter-spacing: -1.3px; }
.help {
  width: 28px;
  height: 28px;
  margin-top: 4px;
  border-radius: 50%;
  background: #7a8092;
  color: #fff;
  font-size: 21px;
  font-weight: 800;
  line-height: 28px;
  text-align: center;
}
.chart { display: block; }
.y-labels { font-family: Roboto, sans-serif; font-size: 24px; fill: #828282; text-anchor: middle; }
.y-narrow { font-size: 23px; }
.x-labels { font-size: 22px; fill: #828282; text-anchor: middle; }
.x-labels .strong { fill: #3c3c3c; }
.axis-title { font-size: 27px; font-weight: 700; fill: #41454d; }
.legend { font-size: 28px; fill: #808080; }
.tip { font-size: 25px; fill: #fff; }

/* Table card */
.table-card { height: 620px; padding-top: 32px; }
.table-card h2 { padding-left: 41px; }
.thead { display: flex; gap: 8px; padding-left: 32px; margin-top: 19px; }
.th {
  width: 636px;
  height: 91px;
  padding-left: 23px;
  border-bottom: 2px solid #e8eaef;
  font-size: 31px;
  font-weight: 600;
  letter-spacing: -.76px;
  line-height: 93px;
  color: #7a8092;
  white-space: nowrap;
}
.th-time { flex: 1; padding: 0 25px 0 0; text-align: right; }
.row {
  display: flex;
  align-items: center;
  height: 80px;
  margin: 0 42px 0 50px;
  border-bottom: 2px solid #e8eaef;
  font-size: 25px;
  white-space: nowrap;
}
.zone { width: 52px; height: 50px; margin-left: -8px; }
.row b { width: 352px; padding-left: 11px; font-weight: 600; letter-spacing: -.55px; }
.row b, .row span { line-height: 74px; }
.addr { flex: 1; color: #7a8092; letter-spacing: -.36px; }
.hours { margin-right: -7px; font-weight: 500; letter-spacing: -1px; }

/* Map */
.map-card {
  position: relative;
  width: 1380px;
  height: 1316px;
  padding: 16px;
  background: #fff;
  box-shadow: 0 6px 16px rgba(40, 50, 70, .06);
}
.map { display: block; overflow: hidden; }
.borders { fill: none; stroke: #84959f; stroke-width: 5; stroke-linejoin: round; }
.city { font-size: 31px; font-weight: 600; fill: #587282; }
.capital { font-size: 42px; font-weight: 600; fill: #405969; }
.map-controls {
  position: absolute;
  top: 479px;
  right: 62px;
  display: flex;
  flex-direction: column;
  gap: 16px;
}
.ctl, .zoom-ctl {
  display: flex;
  align-items: center;
  justify-content: center;
  width: 80px;
  height: 80px;
  border-radius: 40px;
  background: #fff;
  box-shadow: 0 3px 6px rgba(0, 0, 0, .5);
}
.zoom-ctl { flex-direction: column; height: 160px; }
.zoom-btn { display: flex; align-items: center; justify-content: center; width: 48px; height: 79px; background: none; }
.zoom-out { padding-bottom: 2px; }
.zoom-line { width: 48px; height: 2px; background: #e8ebf0; }
```
